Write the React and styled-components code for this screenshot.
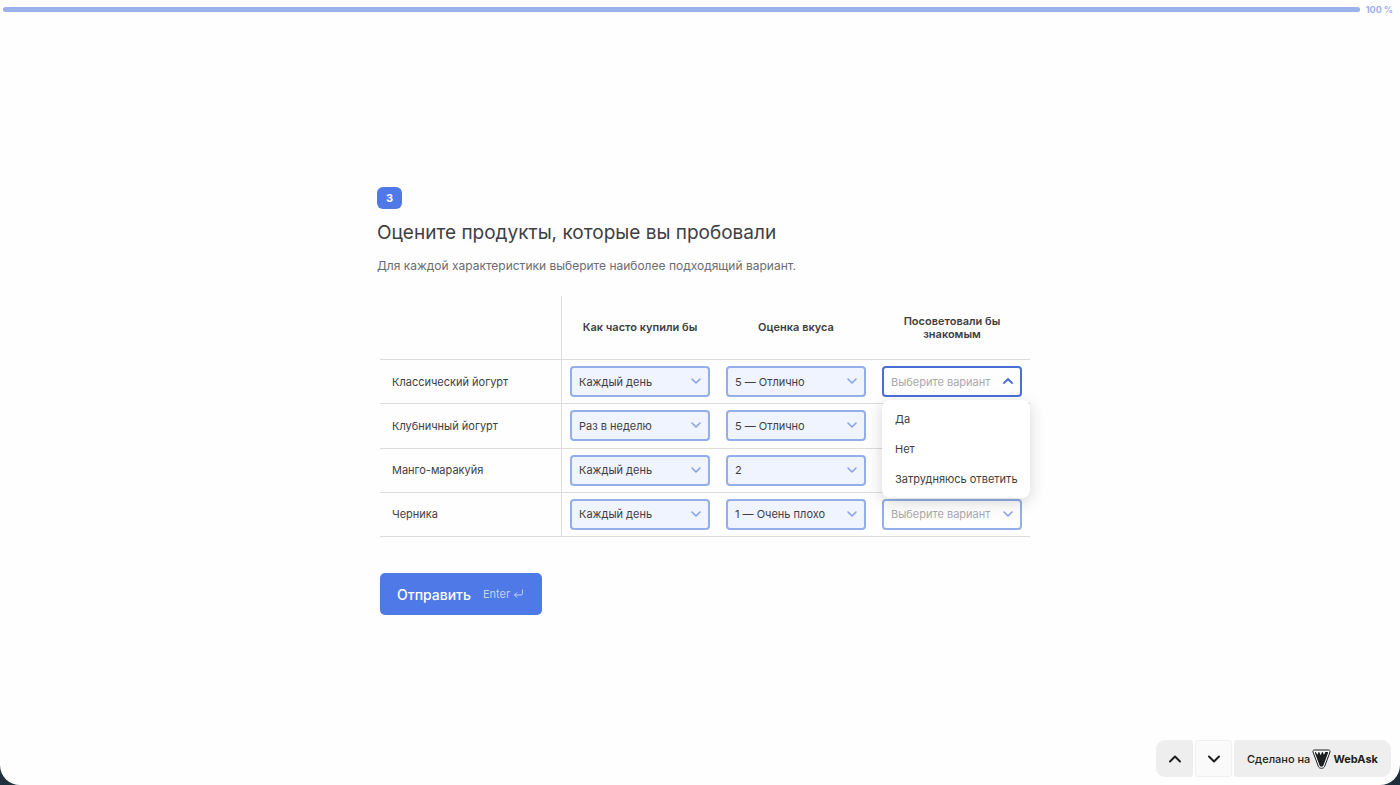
import React from "react";
import styled, { createGlobalStyle, css } from "styled-components";

const GlobalStyle = createGlobalStyle`
  *, *::before, *::after { box-sizing: border-box; }
  body {
    margin: 0;
    background: #1f2f3b;
    font-family: Inter, "Liberation Sans", sans-serif;
    color: #3f4043;
  }
  button, select { font-family: inherit; }
`;

const Page = styled.div`
  min-height: 100vh;
  display: flex;
  flex-direction: column;
  background: #fefefe;
  border-radius: 0 0 20px 20px;
`;

const ProgressHeader = styled.header`
  display: flex;
  align-items: center;
  gap: 6px;
  height: 19px;
  padding: 0 7px 0 3px;
`;

const ProgressTrack = styled.div`
  flex: 1;
  height: 5px;
  border-radius: 3px;
  background: #9bb0ec;
`;

const ProgressLabel = styled.span`
  font-size: 9px;
  line-height: 12px;
  font-weight: 700;
  color: #9bb0ec;
`;

const Main = styled.main`
  flex: 1;
  display: flex;
  align-items: center;
  justify-content: center;
  padding: 0 0 2px 7px;
`;

const Question = styled.form`
  width: 100%;
  max-width: 653px;
`;

const Badge = styled.div`
  display: flex;
  align-items: center;
  justify-content: center;
  width: 25px;
  height: 22px;
  border-radius: 6px;
  background: #5079e8;
  color: #fff;
  font-size: 11px;
  font-weight: 700;
`;

const Title = styled.h1`
  margin: 10px 0 0;
  font-size: 19px;
  line-height: 28px;
  font-weight: 400;
`;

const Description = styled.p`
  margin: 9px 0 0;
  font-size: 12px;
  line-height: 20px;
  color: #6b6c6e;
`;

const AnswerArea = styled.div`
  padding: 20px 0 0 3px;
`;

const Matrix = styled.table`
  width: 100%;
  height: 241px;
  table-layout: fixed;
  border-collapse: separate;
  border-spacing: 0;
  font-size: 11px;
`;

const cell = css`
  padding: 0 8px;
  border-bottom: 1px solid #dcdcde;
`;

const ColumnHead = styled.th`
  ${cell}
  height: 64px;
  padding: 0 20px;
  line-height: 13px;
  font-weight: 600;
  text-align: center;
`;

const CornerCell = styled.td`
  ${cell}
  width: 182px;
  border-right: 1px solid #dcdcde;
`;

const RowHead = styled.th`
  ${cell}
  height: 44px;
  padding: 0 12px;
  border-right: 1px solid #dcdcde;
  font-weight: 400;
  text-align: left;
`;

const Cell = styled.td`
  ${cell}
`;

const Field = styled.div`
  position: relative;
`;

const Select = styled.select`
  display: block;
  width: 100%;
  height: 31px;
  padding: 0 24px 0 7px;
  appearance: none;
  outline: none;
  border: 2px solid ${(p) => (p.$open ? "#4a70d6" : "#94aeea")};
  border-radius: 4px;
  background: ${(p) => (p.$empty ? "#fefefe" : "#f0f4fe")};
  color: ${(p) => (p.$empty ? "#a9a9ab" : "#3f4043")};
  font-size: 11px;
`;

const FieldIcon = styled.svg`
  position: absolute;
  top: 10px;
  right: 8px;
  width: 12px;
  height: 10px;
  fill: none;
  stroke: ${(p) => (p.$open ? "#4a70d6" : "#86a3ea")};
  stroke-width: ${(p) => (p.$open ? 1.8 : 1.6)};
  stroke-linecap: round;
  stroke-linejoin: round;
  pointer-events: none;
`;

const Menu = styled.ul`
  position: absolute;
  z-index: 2;
  top: 34px;
  left: 0;
  width: 148px;
  margin: 0;
  padding: 4px 0;
  list-style: none;
  border-radius: 8px;
  background: #fff;
  box-shadow: 0 4px 16px rgba(0, 0, 0, 0.16);
`;

const MenuItem = styled.li`
  padding: 0 13px;
  font-size: 11px;
  line-height: 30px;
  white-space: nowrap;
`;

const Submit = styled.button`
  display: flex;
  align-items: center;
  gap: 12px;
  height: 42px;
  margin-top: 36px;
  padding: 0 18px 0 17px;
  border: 0;
  border-radius: 5px;
  background: #5079e8;
  color: #fff;
  font-size: 14px;
  font-weight: 500;
`;

const Hint = styled.span`
  display: flex;
  align-items: center;
  gap: 3px;
  font-size: 11px;
  font-weight: 400;
  color: #c3d1f8;
`;

const Dock = styled.nav`
  position: fixed;
  right: 9px;
  bottom: 8px;
  display: flex;
  gap: 2px;
  height: 37px;
`;

const NavButton = styled.button`
  display: flex;
  align-items: center;
  justify-content: center;
  width: 37px;
  padding: 0;
  border: ${(p) => (p.$light ? "1px solid #f0f0f0" : "0")};
  border-radius: ${(p) => (p.$light ? "3px" : "9px 3px 3px 9px")};
  background: ${(p) => (p.$light ? "#fafafa" : "#eeeeee")};
  color: #1d1e20;
`;

const MadeWith = styled.a`
  display: flex;
  align-items: center;
  gap: 2px;
  padding: 0 13px;
  border-radius: 3px 9px 9px 3px;
  background: #eeeeee;
  color: #1d1e20;
  font-size: 11px;
  font-weight: 500;
  text-decoration: none;
`;

const Brand = styled.span`
  font-weight: 700;
`;

const frequency = ["Каждый день", "Раз в неделю"];
const taste = ["5 — Отлично", "2", "1 — Очень плохо"];
const advice = ["Да", "Нет", "Затрудняюсь ответить"];
const columns = [
  { title: "Как часто купили бы", options: frequency },
  { title: "Оценка вкуса", options: taste },
  { title: "Посоветовали бы знакомым", options: advice },
];
const rows = [
  { name: "Классический йогурт", values: ["Каждый день", "5 — Отлично", ""], open: 2 },
  { name: "Клубничный йогурт", values: ["Раз в неделю", "5 — Отлично", ""] },
  { name: "Манго-маракуйя", values: ["Каждый день", "2", ""] },
  { name: "Черника", values: ["Каждый день", "1 — Очень плохо", ""] },
];

function SelectField({ label, options, value, open }) {
  return (
    <Field>
      <Select aria-label={label} defaultValue={value} $empty={!value} $open={open}>
        <option value="" hidden>Выберите вариант</option>
        {options.map((o) => (
          <option key={o} value={o}>{o}</option>
        ))}
      </Select>
      <FieldIcon viewBox="0 0 12 10" $open={open} aria-hidden="true">
        <path d={open ? "M2 7l4-4 4 4" : "M2 3l4 4 4-4"} />
      </FieldIcon>
      {open && (
        <Menu role="listbox" aria-label={label}>
          {options.map((o) => (
            <MenuItem key={o} role="option" aria-selected="false">{o}</MenuItem>
          ))}
        </Menu>
      )}
    </Field>
  );
}

function Chevron({ up }) {
  return (
    <svg width="14" height="10" viewBox="0 0 14 10" fill="none" stroke="currentColor" strokeWidth="2" strokeLinecap="round" strokeLinejoin="round" aria-hidden="true">
      <path d={up ? "M2 7.500l5-5 5 5" : "M2 2.500l5 5 5-5"} />
    </svg>
  );
}

function EnterIcon() {
  return (
    <svg width="11" height="10" viewBox="0 0 11 10" fill="none" stroke="currentColor" strokeLinecap="round" strokeLinejoin="round" aria-hidden="true">
      <path d="M9.500 1v3.500a1.500 1.500 0 0 1-1.500 1.500H1.500M3.800 3.700 1.500 6l2.300 2.300" />
    </svg>
  );
}

function Logo() {
  return (
    <svg width="19" height="20" viewBox="0 0 19 20" aria-hidden="true">
      <path d="M2.400 1h14.200c1.100 0 1.800 1 1.400 2l-5.300 14.300c-.5 1.400-1.600 2-3.200 2s-2.700-.6-3.200-2L1 3C.6 2 1.300 1 2.400 1z" fill="#f7f7f7" stroke="#1d1e20" strokeWidth="1" />
      <path d="M3 4.200c-.2-.6.100-1.100.700-1.100L5.400 5.800 6.600 3h.6l1.500 3.200L10 3h.6l1.400 2.800L13.300 3h2c.6 0 .9.500.7 1.100l-4.600 12.500c-.3.700-.9 1.100-1.900 1.100s-1.600-.4-1.900-1.100z" fill="#1d1e20" />
    </svg>
  );
}

export default function App() {
  return (
    <>
      <GlobalStyle />
      <Page>
        <ProgressHeader>
          <ProgressTrack role="progressbar" aria-label="Прогресс" aria-valuenow={100} />
          <ProgressLabel>100 %</ProgressLabel>
        </ProgressHeader>
        <Main>
          <Question onSubmit={(e) => e.preventDefault()}>
            <Badge>3</Badge>
            <Title>Оцените продукты, которые вы пробовали</Title>
            <Description>Для каждой характеристики выберите наиболее подходящий вариант.</Description>
            <AnswerArea>
              <Matrix>
                <thead>
                  <tr>
                    <CornerCell />
                    {columns.map((c) => (
                      <ColumnHead key={c.title} scope="col">{c.title}</ColumnHead>
                    ))}
                  </tr>
                </thead>
                <tbody>
                  {rows.map((r) => (
                    <tr key={r.name}>
                      <RowHead scope="row">{r.name}</RowHead>
                      {columns.map((c, i) => (
                        <Cell key={c.title}>
                          <SelectField
                            label={`${r.name}: ${c.title}`}
                            options={c.options}
                            value={r.values[i]}
                            open={r.open === i}
                          />
                        </Cell>
                      ))}
                    </tr>
                  ))}
                </tbody>
              </Matrix>
              <Submit type="submit">
                Отправить
                <Hint>Enter <EnterIcon /></Hint>
              </Submit>
            </AnswerArea>
          </Question>
        </Main>
        <Dock>
          <NavButton type="button" aria-label="Назад"><Chevron up /></NavButton>
          <NavButton type="button" aria-label="Вперёд" $light><Chevron /></NavButton>
          <MadeWith href="#webask">
            Сделано на
            <Logo />
            <Brand>WebAsk</Brand>
          </MadeWith>
        </Dock>
      </Page>
    </>
  );
}
